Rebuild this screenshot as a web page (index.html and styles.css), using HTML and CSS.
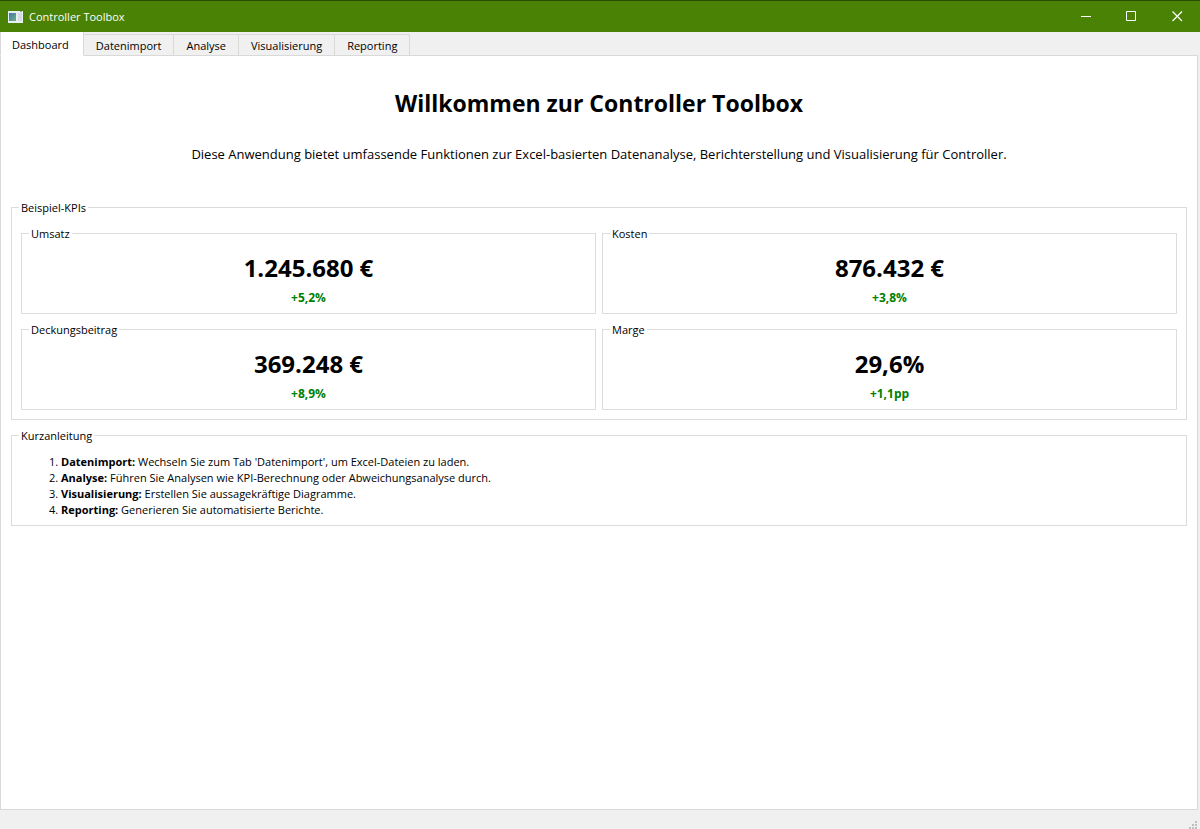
FILE: index.html
```html
<!DOCTYPE html>
<html lang="de">
<head>
<meta charset="utf-8">
<meta name="viewport" content="width=device-width, initial-scale=1">
<title>Controller Toolbox</title>
<link rel="stylesheet" href="styles.css">
</head>
<body>
<div class="window">
  <header class="titlebar">
    <svg class="app-icon" viewBox="0 0 15 12" aria-hidden="true">
      <defs>
        <linearGradient id="pane" x1="0" y1="0" x2="1" y2="1">
          <stop offset="0" stop-color="#3f79a6"/>
          <stop offset="1" stop-color="#6fb08c"/>
        </linearGradient>
      </defs>
      <rect width="15" height="12" fill="#e9eef0"/>
      <rect x="1" y="2" width="7" height="8" fill="url(#pane)"/>
      <rect x="10" y="2" width="4" height="8" fill="#d3dce0"/>
      <rect x="12" y="0" width="2" height="1" fill="#8aa0ac"/>
    </svg>
    <span class="app-name">Controller Toolbox</span>
    <div class="window-controls">
      <button class="window-button" type="button" aria-label="Minimieren">
        <svg viewBox="0 0 11 11"><path d="M1 5.5H11"/></svg>
      </button>
      <button class="window-button" type="button" aria-label="Maximieren">
        <svg viewBox="0 0 11 11"><path d="M.5 .5H9.5V9.5H.5Z"/></svg>
      </button>
      <button class="window-button" type="button" aria-label="Schließen">
        <svg viewBox="0 0 11 11"><path stroke-width="1.2" d="M.5 .5L10 10M10 .5L.5 10"/></svg>
      </button>
    </div>
  </header>

  <nav class="tabs" role="tablist" aria-label="Bereiche">
    <button class="tab tab-active" type="button" role="tab" aria-selected="true" id="tab-dashboard" aria-controls="dashboard">Dashboard</button>
    <button class="tab" type="button" role="tab" aria-selected="false">Datenimport</button>
    <button class="tab" type="button" role="tab" aria-selected="false">Analyse</button>
    <button class="tab" type="button" role="tab" aria-selected="false">Visualisierung</button>
    <button class="tab" type="button" role="tab" aria-selected="false">Reporting</button>
  </nav>

  <main class="page" role="tabpanel" id="dashboard" aria-labelledby="tab-dashboard">
    <h1 class="heading">Willkommen zur Controller Toolbox</h1>
    <p class="intro">Diese Anwendung bietet umfassende Funktionen zur Excel-basierten Datenanalyse, Berichterstellung und Visualisierung für Controller.</p>

    <fieldset class="group">
      <legend class="group-title">Beispiel-KPIs</legend>
      <div class="kpi-grid">
        <fieldset class="kpi">
          <legend class="group-title">Umsatz</legend>
          <div class="kpi-value">1.245.680 €</div>
          <div class="kpi-change">+5,2%</div>
        </fieldset>
        <fieldset class="kpi">
          <legend class="group-title">Kosten</legend>
          <div class="kpi-value">876.432 €</div>
          <div class="kpi-change">+3,8%</div>
        </fieldset>
        <fieldset class="kpi">
          <legend class="group-title">Deckungsbeitrag</legend>
          <div class="kpi-value">369.248 €</div>
          <div class="kpi-change">+8,9%</div>
        </fieldset>
        <fieldset class="kpi">
          <legend class="group-title">Marge</legend>
          <div class="kpi-value">29,6%</div>
          <div class="kpi-change">+1,1pp</div>
        </fieldset>
      </div>
    </fieldset>

    <fieldset class="group guide">
      <legend class="group-title">Kurzanleitung</legend>
      <ol class="steps">
        <li><b>Datenimport:</b> Wechseln Sie zum Tab 'Datenimport', um Excel-Dateien zu laden.</li>
        <li><b>Analyse:</b> Führen Sie Analysen wie KPI-Berechnung oder Abweichungsanalyse durch.</li>
        <li><b>Visualisierung:</b> Erstellen Sie aussagekräftige Diagramme.</li>
        <li><b>Reporting:</b> Generieren Sie automatisierte Berichte.</li>
      </ol>
    </fieldset>
  </main>

  <footer class="statusbar">
    <svg class="grip" viewBox="0 0 8 8" aria-hidden="true">
      <path d="M6 0h2v2h-2zM3 3h2v2h-2zM6 3h2v2h-2zM0 6h2v2h-2zM3 6h2v2h-2zM6 6h2v2h-2z"/>
    </svg>
  </footer>
</div>
</body>
</html>
```
FILE: styles.css
```css
* {
  box-sizing: border-box;
}

body {
  margin: 0;
  font-family: "Segoe UI", "Open Sans", "Noto Sans", sans-serif;
  font-size: 11px;
  line-height: 16px;
  color: #000;
}

button {
  font: inherit;
  color: inherit;
}

.window {
  display: flex;
  flex-direction: column;
  min-height: 100vh;
  background: #f0f0f0;
}

.titlebar {
  display: flex;
  align-items: center;
  height: 32px;
  padding-left: 8px;
  border-top: 1px solid #2b4a08;
  background: #498205;
  color: #fff;
}

.app-icon {
  width: 15px;
  height: 12px;
}

.app-name {
  margin-left: 6px;
}

.window-controls {
  display: flex;
  align-self: stretch;
  margin-left: auto;
}

.window-button {
  display: flex;
  align-items: center;
  justify-content: center;
  width: 46px;
  padding: 0;
  border: 0;
  background: none;
}

.window-button svg {
  width: 11px;
  height: 11px;
  fill: none;
  stroke: #fff;
}

.tabs {
  display: flex;
  align-items: flex-end;
  height: 24px;
}

.tab {
  height: 22px;
  padding: 2px 12px 0;
  border: 1px solid #d9d9d9;
  border-left: 0;
  background: #f0f0f0;
}

.tab-active {
  position: relative;
  height: 24px;
  padding: 2px 14px 0 11px;
  border-top: 0;
  border-left: 1px solid #d9d9d9;
  border-bottom-color: #fff;
  background: #fff;
}

.page {
  flex: 1;
  margin-top: -1px;
  margin-right: 2px;
  padding: 32px 10px 10px;
  border: 1px solid #d9d9d9;
  background: #fff;
}

.heading {
  margin: 0;
  font-size: 23px;
  line-height: 30px;
  text-align: center;
}

.intro {
  margin: 26px 0 36px;
  font-size: 13px;
  line-height: 20px;
  text-align: center;
}

.group,
.kpi {
  min-width: 0;
  margin: 0;
  border: 1px solid #dcdcdc;
}

.group {
  padding: 11px 9px 9px;
}

.group-title {
  height: 15px;
  margin-left: -2px;
  padding: 0 2px;
  line-height: 16px;
}

.kpi-grid {
  display: grid;
  grid-template-columns: 1fr 1fr;
  gap: 8px 6px;
}

.kpi {
  padding: 12px 9px 7px;
}

.kpi-value,
.kpi-change {
  font-weight: bold;
  text-align: center;
}

.kpi-value {
  font-size: 24px;
  line-height: 30px;
}

.kpi-change {
  margin-top: 7px;
  font-size: 12px;
  color: #008000;
}

.guide {
  margin-top: 8px;
  padding-bottom: 7px;
}

.steps {
  margin: 0;
  padding-left: 40px;
}

.statusbar {
  display: flex;
  align-items: flex-end;
  justify-content: flex-end;
  height: 19px;
  padding-right: 3px;
}

.grip {
  width: 8px;
  height: 8px;
  fill: #bfbfbf;
}
```
